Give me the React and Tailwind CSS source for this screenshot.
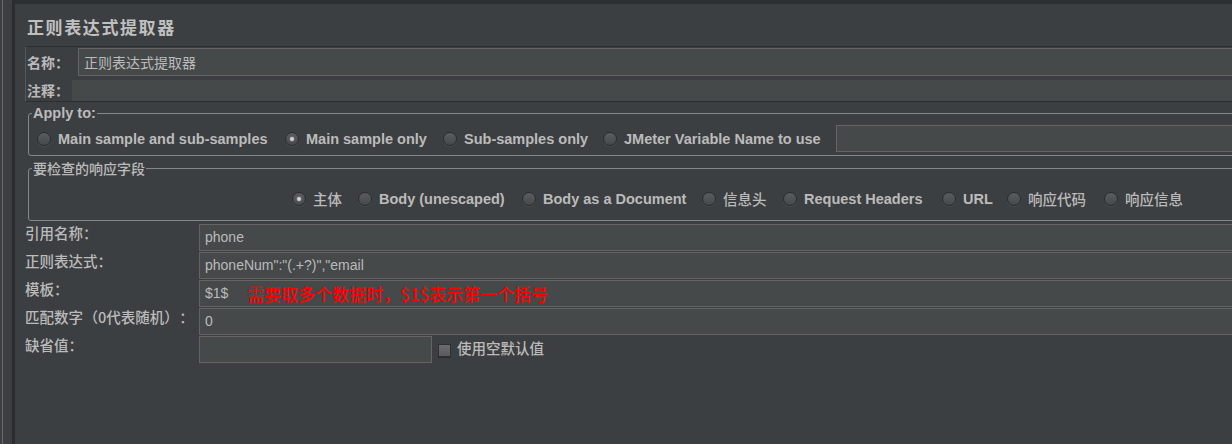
import React from "react";

const SANS = "font-['Liberation_Sans','Noto_Sans_CJK_SC',sans-serif]";
const CJK = "font-['Noto_Sans_CJK_SC',sans-serif]";

function Radio({ checked, label, className = "", cjk = false }) {
  return (
    <div className={`flex items-center gap-[7px] shrink-0 ${className}`}>
      <span className="w-[14px] h-[14px] rounded-full border border-[#2a2c2e] bg-gradient-to-b from-[#5a5d60] to-[#46494b] shadow-[0_1px_0_#4a4d4f] flex items-center justify-center shrink-0">
        {checked && <span className="w-[4px] h-[4px] rounded-full bg-[#d0d0d0] shadow-[0_0_2px_#aaaaaa]" />}
      </span>
      <span
        className={
          cjk
            ? `${CJK} text-[14.5px] leading-[16px] font-medium text-[#bbbbbb] whitespace-nowrap`
            : `${SANS} text-[14.5px] leading-[16px] font-bold text-[#bbbbbb] whitespace-nowrap`
        }
      >
        {label}
      </span>
    </div>
  );
}

function Field({ children, className = "" }) {
  return (
    <div
      className={`h-[27px] bg-[#45494a] border border-[#646464] flex items-center pl-[5px] ${SANS} text-[14px] text-[#bbbbbb] whitespace-nowrap ${className}`}
    >
      {children}
    </div>
  );
}

function FormRow({ label, children }) {
  return (
    <div className="flex items-start h-[27px]">
      <div className={`w-[174px] shrink-0 ${CJK} text-[14.5px] leading-[17px] font-medium text-[#bbbbbb] whitespace-nowrap`}>
        {label}
      </div>
      {children}
    </div>
  );
}

export default function App() {
  return (
    <div className="w-[1232px] h-[444px] overflow-hidden bg-[#3c3f41] flex [text-spacing-trim:space-all]">
      {/* left gutter of the tree pane */}
      <div className="w-[12px] shrink-0 flex">
        <div className="w-[2px]" />
        <div className="w-px bg-[#686b6d]" />
      </div>
      <div className="w-[3px] shrink-0 bg-[#2b2d2f]" />

      <div className="flex-1 min-w-0 overflow-hidden flex flex-col">
        <div className="h-[4px] shrink-0 bg-[#2d3032]" />

        <div className="w-[1240px] shrink-0 pl-[10px]">
          {/* title */}
          <div
            className={`pl-[2px] pt-[12px] mb-[8px] ${CJK} text-[17px] leading-[22px] font-bold tracking-[1.6px] text-[#c0c0c0]`}
          >
            正则表达式提取器
          </div>

          {/* name / comment panel */}
          <div className="border border-[#55585a] border-t-[#2b2e30] border-b-[#2b2e30]">
            <div className="flex items-center mt-px h-[28px]">
              <div className={`w-[52px] shrink-0 pl-[1px] ${CJK} text-[14px] font-bold text-[#bbbbbb]`}>名称：</div>
              <div className={`flex-1 h-[28px] bg-[#45494a] border border-[#646464] flex items-center pl-[5px] ${CJK} text-[14px] text-[#bbbbbb]`}>
                正则表达式提取器
              </div>
            </div>
            <div className="flex items-center mt-[4px] h-[21px]">
              <div className={`w-[46px] shrink-0 pl-[1px] ${CJK} text-[14px] font-bold text-[#bbbbbb]`}>注释：</div>
              <div className="flex-1 h-[21px] bg-[#45494a]" />
            </div>
          </div>

          {/* Apply to */}
          <fieldset className="ml-[3px] mt-[3px] border border-[#85888a] rounded-[3px] pl-[3px] pt-[4px] pb-[3px]">
            <legend className={`px-[1px] ${SANS} text-[14.5px] leading-[16px] font-bold text-[#bbbbbb]`}>Apply to:</legend>
            <div className="flex items-center h-[27px]">
              <Radio label="Main sample and sub-samples" className="ml-[5px] w-[248px]" />
              <Radio checked label="Main sample only" className="w-[158px]" />
              <Radio label="Sub-samples only" className="w-[160px]" />
              <Radio label="JMeter Variable Name to use" className="w-[233px]" />
              <div className="flex-1 h-[27px] bg-[#45494a] border border-[#646464]" />
            </div>
          </fieldset>

          {/* response field to check */}
          <fieldset className="ml-[3px] mt-[4px] border border-[#85888a] rounded-[3px] pl-[3px] pt-[13px] pb-[11px]">
            <legend className={`px-[1px] ${CJK} text-[14px] leading-[16px] font-medium text-[#bbbbbb]`}>要检查的响应字段</legend>
            <div className="flex items-center h-[20px]">
              <Radio checked cjk label="主体" className="ml-[260px] w-[66px]" />
              <Radio label="Body (unescaped)" className="w-[164px]" />
              <Radio label="Body as a Document" className="w-[180px]" />
              <Radio cjk label="信息头" className="w-[81px]" />
              <Radio label="Request Headers" className="w-[159px]" />
              <Radio label="URL" className="w-[65px]" />
              <Radio cjk label="响应代码" className="w-[97px]" />
              <Radio cjk label="响应信息" />
            </div>
          </fieldset>

          {/* extractor settings */}
          <div className="mt-[3px] flex flex-col gap-[1px]">
            <FormRow label="引用名称：">
              <Field className="flex-1">phone</Field>
            </FormRow>
            <FormRow label="正则表达式：">
              <Field className="flex-1">phoneNum":"(.+?)","email</Field>
            </FormRow>
            <FormRow label="模板：">
              <Field className="flex-1">
                <span className="w-[42px] shrink-0">$1$</span>
                <span className={`${CJK} text-[17px] leading-[20px] font-medium text-[#ff0000]`}>
                  需要取多个数据时，$1$表示第一个括号
                </span>
              </Field>
            </FormRow>
            <FormRow
              label={
                <>
                  匹配数字<span className="inline-block w-[15px] text-right">（</span>0代表随机
                  <span className="inline-block w-[15px] text-left">）</span>：
                </>
              }
            >
              <Field className="flex-1">0</Field>
            </FormRow>
            <FormRow label="缺省值：">
              <Field className="w-[233px] shrink-0" />
              <div className="ml-[6px] mt-[8px] w-[13px] h-[13px] shrink-0 border border-[#2e3032] bg-gradient-to-b from-[#6b6d6f] to-[#585a5c] shadow-[0_1px_0_#2a2c2e]" />
              <div className={`ml-[6px] mt-[2px] ${CJK} text-[14.5px] leading-[20px] font-medium text-[#bbbbbb] whitespace-nowrap`}>
                使用空默认值
              </div>
            </FormRow>
          </div>
        </div>
      </div>
    </div>
  );
}
